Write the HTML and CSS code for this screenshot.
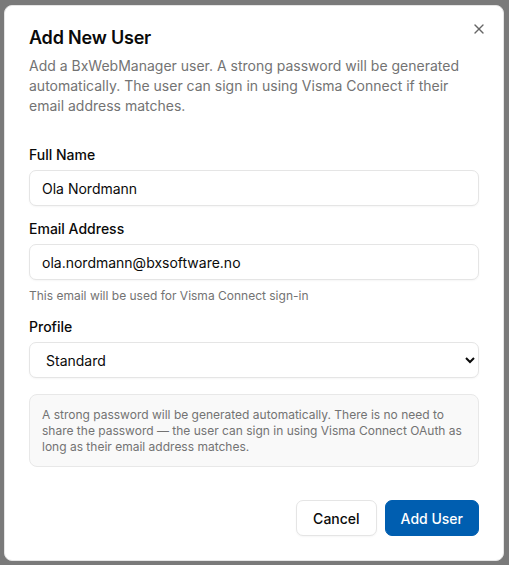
FILE: index.html
```html
<!DOCTYPE html>
<html lang="en">
<head>
<meta charset="utf-8">
<title>Add New User</title>
<link rel="stylesheet" href="styles.css">
</head>
<body>
<div class="overlay">
  <div class="dialog" role="dialog">
    <button class="close" aria-label="Close">
      <svg width="16" height="16" viewBox="0 0 24 24" fill="none" stroke="currentColor" stroke-width="2" stroke-linecap="round"><path d="M18 6 6 18"/><path d="m6 6 12 12"/></svg>
    </button>
    <div class="header">
      <h2 class="title">Add New User</h2>
      <p class="desc">Add a BxWebManager user. A strong password will be generated automatically. The user can sign in using Visma Connect if their email address matches.</p>
    </div>
    <div class="form">
      <div class="field">
        <label class="label">Full Name</label>
        <input class="input" type="text" value="Ola Nordmann">
      </div>
      <div class="field">
        <label class="label">Email Address</label>
        <input class="input" type="email" value="ola.nordmann@bxsoftware.no">
        <p class="help">This email will be used for Visma Connect sign-in</p>
      </div>
      <div class="field">
        <label class="label">Profile</label>
        <select class="select"><option>Standard</option></select>
      </div>
      <div class="info">A strong password will be generated automatically. There is no need to share the password — the user can sign in using Visma Connect OAuth as long as their email address matches.</div>
    </div>
    <div class="footer">
      <button class="btn btn-outline">Cancel</button>
      <button class="btn btn-primary">Add User</button>
    </div>
  </div>
</div>
</body>
</html>
```

FILE: styles.css
```css
* { box-sizing: border-box; }
html, body { margin: 0; padding: 0; }
body {
  background: #7a7a7a;
  font-family: Inter, "Noto Sans", sans-serif;
  color: #0a0a0a;
  width: 509px;
  height: 565px;
  overflow: hidden;
}
.overlay {
  padding: 5px 5px 4px 4px;
  height: 565px;
}
.dialog {
  position: relative;
  background: #fff;
  border: 1px solid #e5e5e5;
  border-radius: 8px;
  height: 556px;
  padding: 22px 24px 24px;
  display: flex;
  flex-direction: column;
}
.close {
  position: absolute;
  top: 15px;
  right: 16px;
  border: 0;
  background: none;
  padding: 0;
  color: #333;
  width: 16px;
  height: 16px;
  opacity: 0.75;
}
.close svg { display: block; }
.header { display: flex; flex-direction: column; gap: 8px; }
.title {
  margin: 0;
  font-size: 18px;
  line-height: 20px;
  font-weight: 600;
  letter-spacing: -0.2px;
}
.desc {
  margin: 0;
  font-size: 14px;
  line-height: 20px;
  color: #737373;
}
.form {
  display: flex;
  flex-direction: column;
  gap: 16px;
  margin-top: 32px;
}
.field { display: flex; flex-direction: column; gap: 8px; }
.label {
  font-size: 14px;
  line-height: 14px;
  font-weight: 500;
}
.input, .select {
  height: 36px;
  width: 100%;
  border: 1px solid #e5e5e5;
  border-radius: 7px;
  padding: 0 12px;
  font-family: inherit;
  font-size: 14px;
  color: #0a0a0a;
  background: #fff;
  box-shadow: 0 1px 2px rgba(0,0,0,0.04);
}
.select { padding: 0 8px 0 12px; }
.help {
  margin: 0;
  font-size: 12px;
  line-height: 16px;
  color: #737373;
}
.info {
  background: #f9f9f9;
  border: 1px solid #e8e8e8;
  border-radius: 8px;
  padding: 12px 12px 11px;
  font-size: 12px;
  line-height: 16px;
  color: #737373;
}
.footer {
  margin-top: auto;
  display: flex;
  justify-content: flex-end;
  gap: 8px;
}
.btn {
  height: 36px;
  padding: 0 16px;
  border-radius: 7px;
  font-family: inherit;
  font-size: 14px;
  font-weight: 500;
}
.btn-outline {
  background: #fff;
  border: 1px solid #e5e5e5;
  color: #0a0a0a;
  box-shadow: 0 1px 2px rgba(0,0,0,0.04);
}
.btn-primary {
  background: #005eb0;
  border: 1px solid #005eb0;
  color: #fff;
  padding: 0 15px;
}
```
